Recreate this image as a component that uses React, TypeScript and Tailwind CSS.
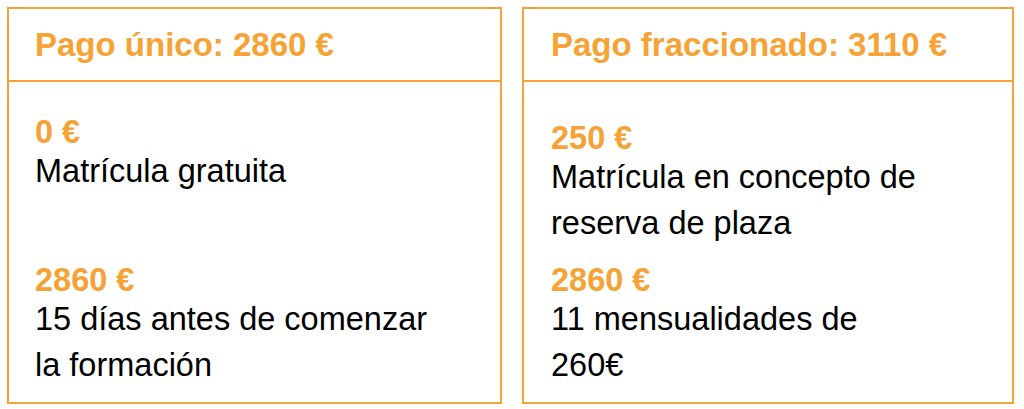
const font = { fontFamily: '"Liberation Sans", Arial, sans-serif' };

type Item = { amount: string; lines: string[] };

function PlanCard({
  title,
  first,
  second,
  widthClass,
  padClass,
  firstTopClass,
}: {
  title: string;
  first: Item;
  second: Item;
  widthClass: string;
  padClass: string;
  firstTopClass: string;
}) {
  return (
    <div className={`${widthClass} h-[397px] border-2 border-[#f7a235] flex flex-col`}>
      <div className={`h-[73px] border-b-2 border-[#f7a235] flex items-center ${padClass} pt-[1px]`}>
        <h2 className="text-[33px] font-bold text-[#f7a235] whitespace-nowrap">{title}</h2>
      </div>
      <div className={`grid grid-rows-[183px_auto] ${padClass}`}>
        <Block item={first} className={firstTopClass} />
        <Block item={second} className="" />
      </div>
    </div>
  );
}

function Block({ item, className }: { item: Item; className: string }) {
  return (
    <div className={className}>
      <div className="text-[32.5px] leading-[31px] font-bold text-[#f7a235] whitespace-nowrap">{item.amount}</div>
      <p className="text-[32.5px] leading-[46px] text-black whitespace-nowrap">
        {item.lines.map((l, i) => (
          <span key={i} className="block">
            {l}
          </span>
        ))}
      </p>
    </div>
  );
}

export default function App() {
  return (
    <div className="w-[1024px] h-[409px] bg-white pl-[7px] pt-[7px] flex gap-[20px]" style={font}>
      <PlanCard
        title="Pago único: 2860 €"
        widthClass="w-[495px]"
        padClass="pl-[26px]"
        firstTopClass="pt-[35px]"
        first={{ amount: "0 €", lines: ["Matrícula gratuita"] }}
        second={{ amount: "2860 €", lines: ["15 días antes de comenzar", "la formación"] }}
      />
      <PlanCard
        title="Pago fraccionado: 3110 €"
        widthClass="w-[492px]"
        padClass="pl-[27px]"
        firstTopClass="pt-[41px]"
        first={{ amount: "250 €", lines: ["Matrícula en concepto de", "reserva de plaza"] }}
        second={{ amount: "2860 €", lines: ["11 mensualidades de", "260€"] }}
      />
    </div>
  );
}
